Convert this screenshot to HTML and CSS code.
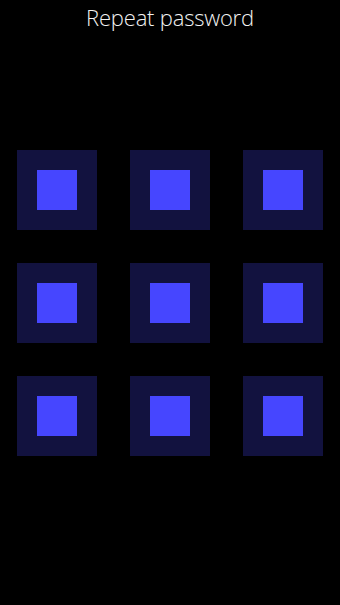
FILE: index.html
```html
<!DOCTYPE html>
<html>
<head>
<meta charset="utf-8">
<link rel="stylesheet" href="styles.css">
</head>
<body>
<div class="screen">
  <h1 class="title">Repeat password</h1>
  <div class="grid">
    <div class="cell"><div class="dot"></div></div>
    <div class="cell"><div class="dot"></div></div>
    <div class="cell"><div class="dot"></div></div>
    <div class="cell"><div class="dot"></div></div>
    <div class="cell"><div class="dot"></div></div>
    <div class="cell"><div class="dot"></div></div>
    <div class="cell"><div class="dot"></div></div>
    <div class="cell"><div class="dot"></div></div>
    <div class="cell"><div class="dot"></div></div>
  </div>
</div>
</body>
</html>
```
FILE: styles.css
```css
html, body {
  margin: 0;
  padding: 0;
  background: #000;
}
.screen {
  width: 340px;
  height: 605px;
  background: #000;
  display: flex;
  flex-direction: column;
  align-items: center;
}
.title {
  margin: 0;
  padding-top: 2px;
  height: 150px;
  box-sizing: border-box;
  font-family: "Open Sans", sans-serif;
  font-weight: 300;
  font-size: 22px;
  line-height: 30px;
  letter-spacing: -0.2px;
  color: #f2f2f2;
  text-align: center;
}
.grid {
  display: grid;
  grid-template-columns: repeat(3, 80px);
  grid-auto-rows: 80px;
  gap: 33px;
}
.cell {
  background: #12123f;
  display: flex;
  align-items: center;
  justify-content: center;
}
.dot {
  width: 40px;
  height: 40px;
  background: #4646ff;
}
```
